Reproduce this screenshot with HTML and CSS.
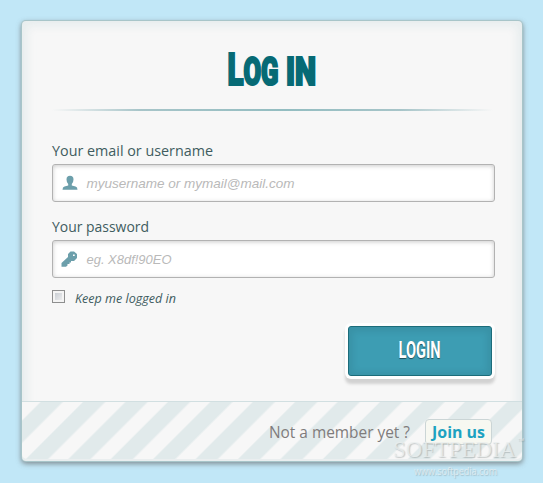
FILE: index.html
```
<!DOCTYPE html>
<html lang="en">
<head>
<meta charset="utf-8">
<title>Log in</title>
<link rel="stylesheet" href="styles.css">
</head>
<body>
<main class="card">
  <form class="form">
    <h1 class="title"><svg width="100" height="50" viewBox="0 0 100 50"><text class="cap" y="40" x="5.500" textLength="16" lengthAdjust="spacingAndGlyphs">L</text><text class="small" x="21.500" y="40" textLength="35" lengthAdjust="spacingAndGlyphs">OG</text><text class="small" x="64" y="40" textLength="30" lengthAdjust="spacingAndGlyphs">IN</text></svg></h1>
    <div class="rule"></div>
    <label class="label"><svg width="170" height="22"><text x="0" y="16" textLength="161" lengthAdjust="spacingAndGlyphs">Your email or username</text></svg></label>
    <div class="field">
      <svg class="icon" width="16" height="16" viewBox="0 0 16 16"><path d="M4.500 4.500q0-3.700 3.500-3.700t3.500 3.700q0 2.800-1.700 4.500v1.500l3.700 1q2 .6 2 3.200H.5q0-2.600 2-3.200l3.700-1V9Q4.500 7.300 4.500 4.500z"/></svg>
      <svg class="hint" width="230" height="22"><text x="-.5" y="16" textLength="208" lengthAdjust="spacingAndGlyphs">myusername or mymail@mail.com</text></svg>
    </div>
    <label class="label second"><svg width="170" height="22"><text x="0" y="16" textLength="97" lengthAdjust="spacingAndGlyphs">Your password</text></svg></label>
    <div class="field">
      <svg class="icon" width="16" height="16" viewBox="0 0 16 16"><path fill-rule="evenodd" d="M8.500.5h3.500l3 2.500v4l-3 3H9v1.500H7.500V13H5.500v1.500L4 15.700H-.5V12L6 6V3zM11 3.500v1.500h1.700V3.500z"/></svg>
      <svg class="hint" width="230" height="22"><text x="-.5" y="16" textLength="85" lengthAdjust="spacingAndGlyphs">eg. X8df!90EO</text></svg>
    </div>
    <div class="keep"><span class="check"></span><svg width="110" height="18"><text x="0" y="13" textLength="101" lengthAdjust="spacingAndGlyphs">Keep me logged in</text></svg></div>
    <button class="login" type="button"><svg width="50" height="30"><text x="3.500" y="22" textLength="42" lengthAdjust="spacingAndGlyphs">LOGIN</text></svg></button>
  </form>
  <footer class="foot">
    <svg class="ask" width="143" height="24"><text x="0" y="18" textLength="141" lengthAdjust="spacingAndGlyphs">Not a member yet ?</text></svg>
    <a class="join"><svg width="55" height="24"><text x="0" y="18" textLength="53" lengthAdjust="spacingAndGlyphs">Join us</text></svg></a>
  </footer>
</main>
<svg class="mark" width="140" height="50"><text class="brand" x="0" y="26" textLength="123" lengthAdjust="spacingAndGlyphs">SOFTPEDIA</text><text class="tm" x="124" y="12">™</text><text class="site" x="21" y="44" textLength="83" lengthAdjust="spacingAndGlyphs">www.softpedia.com</text></svg>
</body>
</html>
```
FILE: styles.css
```
* { box-sizing: border-box; }
body {
  margin: 0;
  padding: 20px 20px 0 21px;
  height: 483px;
  overflow: hidden;
  background: #c1e7f7;
  font-family: "Open Sans", sans-serif;
}
svg { display: block; overflow: visible; flex: none; }
.card {
  width: 502px;
  height: 442px;
  display: flex;
  flex-direction: column;
  background: #f7f7f7;
  border: 1px solid rgba(147, 184, 189, .8);
  border-radius: 5px;
  box-shadow: 0 2px 5px rgba(105, 108, 109, .7), 0 0 8px 5px rgba(208, 223, 226, .4) inset;
}
.form {
  height: 380px;
  padding: 24px 27px 0 30px;
  display: flex;
  flex-direction: column;
}
.title { margin: 0 0 0 170px; height: 50px; }
.title text {
  font-family: Roboto, sans-serif;
  font-weight: 900;
  fill: #066a75;
  stroke: #066a75;
  stroke-width: 2.2px;
}
.cap { font-size: 45px; }
.small { font-size: 38px; }
.rule {
  height: 2px;
  margin: 14px 2px 0 0;
  background: linear-gradient(to right, rgba(147, 184, 189, 0), rgba(147, 184, 189, .8) 20%, #93bdc1 53%, rgba(147, 184, 189, .8) 79%, rgba(147, 184, 189, 0));
}
.label { margin-top: 29px; height: 24px; font-size: 15px; fill: #405c60; }
.second { margin-top: 14px; }
.field {
  width: 443px;
  height: 38px;
  display: flex;
  align-items: center;
  padding-left: 9px;
  gap: 9px;
  background: #fff;
  border: 1px solid #b2b2b2;
  border-radius: 3px;
  box-shadow: 0 1px 4px rgba(168, 168, 168, .6) inset;
}
.icon { fill: #6c9fab; }
.hint { font: italic 13.5px "Liberation Sans", sans-serif; fill: #b9b9b9; }
.keep {
  display: flex;
  height: 18px;
  margin-top: 12px;
  gap: 10px;
  font-size: 12px;
  font-style: italic;
  fill: #405c60;
}
.check {
  width: 13px;
  height: 13px;
  border: 1px solid #8e8f8f;
  background: linear-gradient(135deg, #bfc5cc, #f5f5f5);
  box-shadow: inset 0 0 0 2px #f4f4f4;
}
.login {
  align-self: flex-end;
  width: 144px;
  height: 50px;
  margin: 18px 3px 0 0;
  padding: 0;
  display: flex;
  align-items: center;
  justify-content: center;
  background: #3d9db3;
  border: 1px solid #1c6c7a;
  border-radius: 3px;
  box-shadow: 0 1px 6px 4px rgba(0, 0, 0, .07) inset, 0 0 0 3px #fefefe, 0 5px 3px 3px #d2d2d2;
}
.login text {
  font: 700 24px Roboto, sans-serif;
  fill: #fff;
  text-shadow: 0 1px 1px rgba(0, 0, 0, .5);
}
.foot {
  flex: 1;
  display: flex;
  align-items: center;
  justify-content: flex-end;
  gap: 13px;
  padding: 3px 30px 0 0;
  margin-bottom: 2px;
  border-top: 1px solid #d1dfe1;
  border-radius: 0 0 5px 5px;
  font-size: 16px;
  fill: #7f7c7c;
  background: repeating-linear-gradient(-45deg, #f7f7f7 0, #f7f7f7 4px, #e1eaeb 6px, #e1eaeb 20px, #f7f7f7 21.5px, #f7f7f7 30px);
}
.join {
  width: 67px;
  height: 26px;
  padding-left: 6px;
  background: #f7f8f1;
  border: 1px solid #cbd5d6;
  border-radius: 4px;
  font-weight: 700;
  fill: #1da2c1;
}
.mark { position: absolute; left: 393px; top: 431px; }
.mark text {
  fill: rgba(235, 239, 239, .75);
  text-shadow: 1px 1px 1px rgba(100, 110, 110, .45);
}
.mark .brand { font: 24px "Liberation Serif", serif; }
.mark .tm { font: 7px "Liberation Sans", sans-serif; }
.mark .site { font: 10px "Open Sans", sans-serif; }
```
